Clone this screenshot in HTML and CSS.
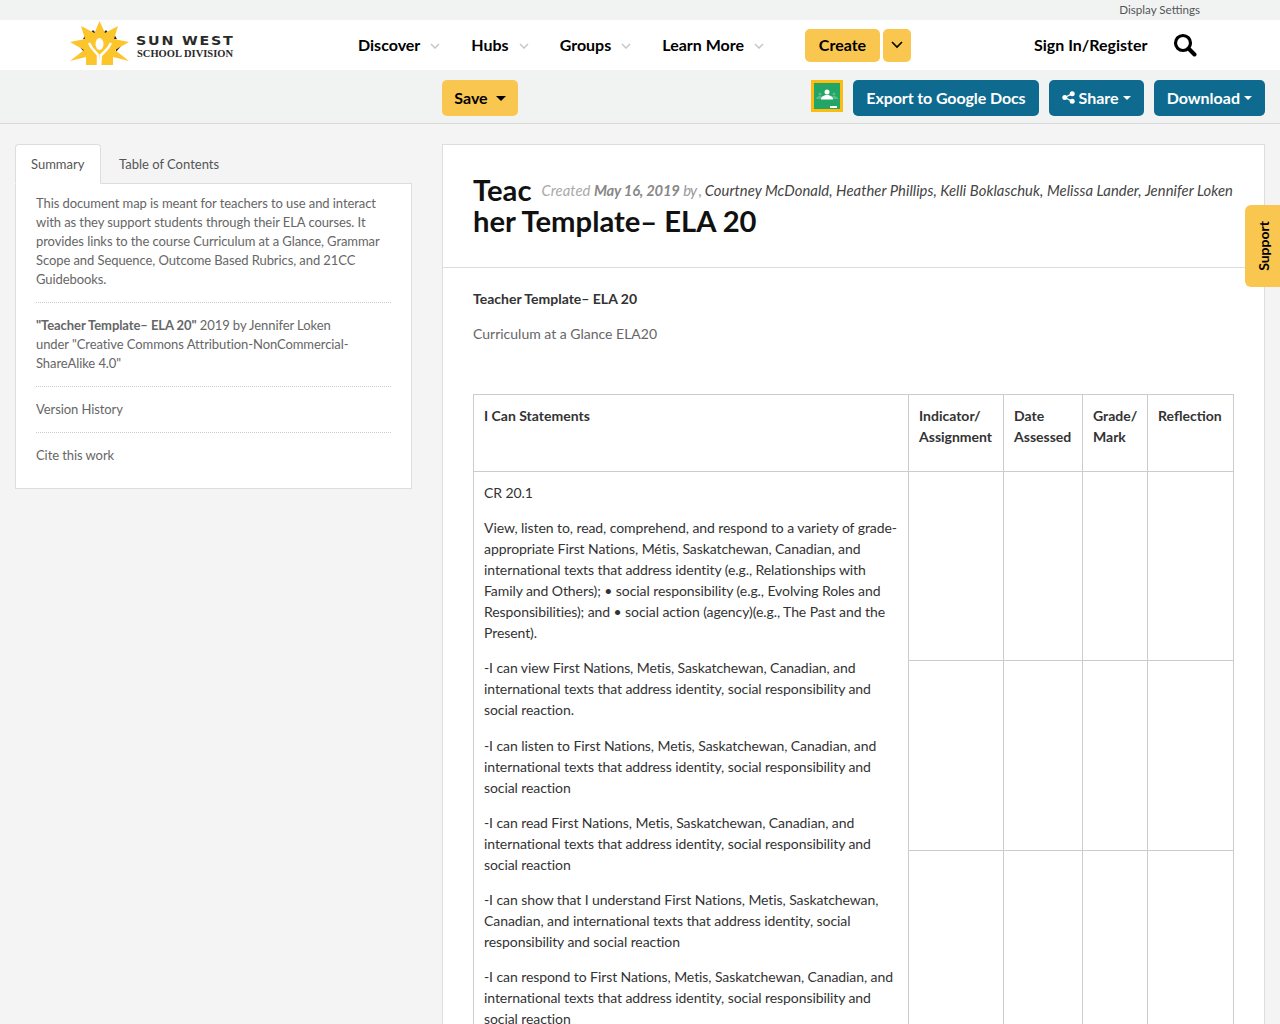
FILE: index.html
```html
<!DOCTYPE html>
<html lang="en">
<head>
<meta charset="utf-8">
<title>Teacher Template– ELA 20</title>
<link rel="stylesheet" href="styles.css">
</head>
<body>
<div class="topbar"><a class="display-settings">Display Settings</a></div>
<header class="nav">
  <a class="logo">
    <svg class="logo-mark" width="60" height="46" viewBox="0 0 60 46">
      <path fill="#2b2b2b" d="M18 16l5-6 5 5zM31 15l5-5 5 6zM13 19l3-5 4 6zM40 20l4-6 3 5zM8 25l6-1v8zM46 24l6 1-6 7z"/>
      <path fill="#fdc52c" d="M29.500 1l5.500 12L48 6l-4 13 15 3-14 8 14 11-16-4v8H16v-8L0 41l14-11L0 22l15-3-4-13 13.500 7z"/>
      <ellipse cx="29.500" cy="24" rx="4" ry="6" fill="#fff"/>
      <path fill="none" stroke="#fff" stroke-width="2.500" d="M19 23c3 7 7 9 9 12l0 11M41 23c-3 7-7 9-10 12l-1 11"/>
    </svg>
    <span class="logo-text">
      <span class="logo-sun">SUN WEST</span>
      <span class="logo-school">SCHOOL DIVISION</span>
    </span>
  </a>
  <nav class="menu">
    <a class="menu-item">Discover<svg class="chev" viewBox="0 0 10 6"><path d="M1 1l4 4 4-4"/></svg></a>
    <a class="menu-item">Hubs<svg class="chev" viewBox="0 0 10 6"><path d="M1 1l4 4 4-4"/></svg></a>
    <a class="menu-item">Groups<svg class="chev" viewBox="0 0 10 6"><path d="M1 1l4 4 4-4"/></svg></a>
    <a class="menu-item">Learn More<svg class="chev" viewBox="0 0 10 6"><path d="M1 1l4 4 4-4"/></svg></a>
  </nav>
  <div class="create-group">
    <a class="btn-yellow create">Create</a>
    <a class="btn-yellow create-toggle"><svg width="12" height="8" viewBox="0 0 12 8"><path d="M1 1l5 5 5-5" fill="none" stroke="#000" stroke-width="1.600"/></svg></a>
  </div>
  <a class="signin">Sign In/Register</a>
  <svg class="search" width="24" height="24" viewBox="0 0 24 24"><circle cx="10" cy="10" r="7.500" fill="none" stroke="#000" stroke-width="3.200"/><path d="M15.500 15.500l6 6" stroke="#000" stroke-width="4" stroke-linecap="round"/></svg>
</header>
<div class="toolbar">
  <div class="toolbar-left"><a class="btn-yellow save">Save<span class="caret caret-big"></span></a></div>
  <div class="toolbar-right">
    <svg class="classroom" width="32" height="32" viewBox="0 0 32 32">
      <rect x="1.500" y="1.500" width="29" height="29" fill="#23a566" stroke="#fdbc0f" stroke-width="3"/>
      <circle cx="9" cy="14" r="1.500" fill="#57bb8a"/><circle cx="23" cy="14" r="1.500" fill="#57bb8a"/>
      <path d="M5 19c0-2 2-3 4-3s4 1 4 3zM19 19c0-2 2-3 4-3s4 1 4 3z" fill="#57bb8a"/>
      <circle cx="16" cy="12" r="2.500" fill="#fff"/>
      <path d="M10 19.500c0-3 3-4.500 6-4.500s6 1.500 6 4.500z" fill="#fff"/>
      <rect x="19" y="26" width="7" height="2" fill="#fff"/>
    </svg>
    <a class="btn-blue btn-export">Export to Google Docs</a>
    <a class="btn-blue"><svg class="share-icon" width="13" height="13" viewBox="0 0 13 13"><circle cx="2.800" cy="6.500" r="2.500"/><circle cx="10.200" cy="2.700" r="2.500"/><circle cx="10.200" cy="10.300" r="2.500"/><path d="M2.800 6.500l7.400-3.800M2.800 6.500l7.400 3.800" stroke="#fff" stroke-width="1.300"/></svg>Share<span class="caret"></span></a>
    <a class="btn-blue">Download<span class="caret"></span></a>
  </div>
</div>
<main class="content">
  <aside class="sidebar">
    <div class="tabs">
      <a class="tab tab-active">Summary</a>
      <a class="tab">Table of Contents</a>
    </div>
    <div class="side-panel">
      <p class="side-sec">This document map is meant for teachers to use and interact with as they support students through their ELA courses. It provides links to the course Curriculum at a Glance, Grammar Scope and Sequence, Outcome Based Rubrics, and 21CC Guidebooks.</p>
      <p class="side-sec"><strong>"Teacher Template– ELA 20"</strong> 2019 by Jennifer Loken<br>under "Creative Commons Attribution-NonCommercial-ShareAlike 4.0"</p>
      <p class="side-sec">Version History</p>
      <p class="side-sec side-last">Cite this work</p>
    </div>
  </aside>
  <article class="doc">
    <header class="doc-head">
      <h1 class="doc-title">Teac<span class="doc-meta"><span class="meta-light">Created</span> <b>May 16, 2019</b> <span class="meta-light meta-by">by ,</span> Courtney McDonald, Heather Phillips, Kelli Boklaschuk, Melissa Lander, Jennifer Loken</span><br>her Template– ELA 20</h1>
    </header>
    <div class="doc-body">
      <p class="doc-sub"><strong>Teacher Template– ELA 20</strong></p>
      <p class="doc-link">Curriculum at a Glance ELA20</p>
      <table class="grid">
        <colgroup><col class="c1"><col class="c2"><col class="c3"><col class="c4"><col class="c5"></colgroup>
        <thead>
          <tr class="head-row">
            <th>I Can Statements</th>
            <th>Indicator/ Assignment</th>
            <th>Date Assessed</th>
            <th>Grade/ Mark</th>
            <th>Reflection</th>
          </tr>
        </thead>
        <tbody>
          <tr class="row-a">
            <td rowspan="3">
              <p>CR 20.1</p>
              <p>View, listen to, read, comprehend, and respond to a variety of grade-appropriate First Nations, Métis, Saskatchewan, Canadian, and international texts that address identity (e.g., Relationships with Family and Others); • social responsibility (e.g., Evolving Roles and Responsibilities); and • social action (agency)(e.g., The Past and the Present).</p>
              <p>-I can view First Nations, Metis, Saskatchewan, Canadian, and international texts that address identity, social responsibility and social reaction.</p>
              <p>-I can listen to First Nations, Metis, Saskatchewan, Canadian, and international texts that address identity, social responsibility and social reaction</p>
              <p>-I can read First Nations, Metis, Saskatchewan, Canadian, and international texts that address identity, social responsibility and social reaction</p>
              <p>-I can show that I understand First Nations, Metis, Saskatchewan, Canadian, and international texts that address identity, social responsibility and social reaction</p>
              <p>-I can respond to First Nations, Metis, Saskatchewan, Canadian, and international texts that address identity, social responsibility and social reaction</p>
            </td>
            <td></td><td></td><td></td><td></td>
          </tr>
          <tr class="row-a"><td></td><td></td><td></td><td></td></tr>
          <tr class="row-a"><td></td><td></td><td></td><td></td></tr>
        </tbody>
      </table>
    </div>
  </article>
</main>
<a class="support">Support</a>
</body>
</html>
```
FILE: styles.css
```css
* { box-sizing: border-box; }
html, body { margin: 0; padding: 0; }
body {
  font-family: Lato, "Liberation Sans", sans-serif;
  font-size: 14px;
  color: #333;
  background: #f4f4f4;
}
a { color: inherit; text-decoration: none; }
.topbar {
  height: 20px;
  background: #f1f3f3;
  display: flex;
  justify-content: flex-end;
  align-items: flex-start;
  padding-right: 80px;
}
.display-settings { font-size: 11.600px; color: #555; line-height: 20px; }
.nav {
  height: 50px;
  background: #fff;
  display: flex;
  align-items: center;
  padding-left: 70px;
  color: #000;
}
.logo { display: flex; align-items: center; width: 288px; height: 50px; }
.logo-mark { margin-top: -4px; flex: none; }
.logo-text { display: flex; flex-direction: column; margin-left: 6px; margin-top: 3px; color: #2a2a2a; }
.logo-sun { font-family: "DejaVu Sans", sans-serif; font-weight: 700; font-size: 13px; letter-spacing: 1.600px; line-height: 14px; white-space: nowrap; transform: scaleX(1.1); transform-origin: left; }
.logo-school { font-family: "Liberation Serif", serif; font-weight: 700; font-size: 10.500px; line-height: 12px; white-space: nowrap; margin-left: 1px; }
.menu { display: flex; width: 447px; }
.menu-item { font-size: 16px; font-weight: 700; display: flex; align-items: center; margin-right: 31px; padding-bottom: 2px; }
.chev { width: 10px; height: 6px; margin-left: 10px; margin-top: 4px; }
.chev path { fill: none; stroke: #c4c8c8; stroke-width: 1.500; }
.btn-yellow {
  background: #f9c74f;
  color: #000;
  border-radius: 5px;
  font-weight: 700;
  font-size: 16px;
  display: inline-flex;
  align-items: center;
  justify-content: center;
}
.create-group { display: flex; gap: 3px; width: 229px; }
.create { width: 75px; height: 33px; padding-bottom: 2px; }
.create-toggle { width: 28px; height: 33px; }
.signin { font-size: 16px; font-weight: 700; width: 141px; padding-bottom: 2px; margin-right: -2px; }
.search { margin-top: -1px; }
.toolbar {
  height: 54px;
  background: #f1f3f3;
  border-bottom: 1px solid #d9d9d9;
  display: flex;
  align-items: flex-start;
  padding: 10px 15px 0 442px;
  justify-content: space-between;
}
.save { width: 76px; height: 36px; padding-bottom: 2px; }
.caret { display: inline-block; width: 0; height: 0; margin-left: 4px; margin-top: 2px; border-top: 4px solid currentColor; border-left: 4px solid transparent; border-right: 4px solid transparent; }
.caret-big { margin-left: 8px; border-top-width: 5px; border-left-width: 5px; border-right-width: 5px; }
.toolbar-right { display: flex; gap: 10px; align-items: flex-start; }
.btn-blue {
  height: 36px;
  padding: 0 13px 2px;
  background: #0e6a8e;
  color: #fff;
  border-radius: 5px;
  font-size: 16px;
  font-weight: 700;
  display: inline-flex;
  align-items: center;
}
.btn-export { letter-spacing: -.1px; }
.share-icon { margin-right: 4px; fill: #fff; }
.content {
  display: flex;
  align-items: flex-start;
  padding: 20px 15px 0;
  gap: 30px;
}
.sidebar { width: 397px; flex: none; font-size: 13px; }
.tabs { display: flex; height: 40px; position: relative; z-index: 1; }
.tab { height: 40px; padding: 0 15px; margin-right: 2px; display: flex; align-items: center; color: #555; border: 1px solid transparent; }
.tab-active { background: #fff; border: 1px solid #ddd; border-bottom-color: #fff; border-radius: 4px 4px 0 0; width: 86px; padding: 0 0 0 15px; }
.side-panel {
  background: #fff;
  border: 1px solid #ddd;
  margin-top: -1px;
  padding: 10px 20px 6px;
  height: 306px;
  color: #666;
  line-height: 19px;
  letter-spacing: -.08px;
}
.side-sec { margin: 0 0 13px; padding-bottom: 13px; border-bottom: 1px dotted #ccc; }
.side-last { border-bottom: 0; margin: 0; padding: 0; }
.doc { flex: 1; background: #fff; border: 1px solid #ddd; border-bottom: 0; min-width: 0; overflow: hidden; }
.doc-head { height: 123px; padding: 29px 30px 0; border-bottom: 1px solid #ddd; }
.doc-title { margin: 0; font-size: 29.200px; line-height: 31px; font-weight: 700; color: #111; }
.doc-meta { margin-left: 10px; font-size: 14.800px; line-height: 1; font-weight: 400; font-style: italic; color: #444; vertical-align: 5px; letter-spacing: .05px; }
.meta-light { color: #aaa; }
.meta-by { letter-spacing: -.8px; color: #999; }
.doc-meta b { color: #888; letter-spacing: -.2px; }
.doc-body { padding: 20px 30px 0; font-size: 14px; line-height: 21px; }
.doc-sub { margin: 0 0 14px; color: #333; }
.doc-link { margin: 0 0 50px; color: #666; }
.grid { border-collapse: collapse; table-layout: fixed; width: 760px; color: #333; }
.c1 { width: 435px; } .c2 { width: 95px; } .c3 { width: 79px; } .c4 { width: 65px; } .c5 { width: 86px; }
.grid th, .grid td { border: 1px solid #ccc; padding: 10px; text-align: left; vertical-align: top; font-size: 14px; line-height: 21px; }
.grid td { letter-spacing: -.08px; }
.grid th { font-weight: 700; }
.head-row { height: 77px; }
.row-a { height: 189.400px; }
.grid p { margin: 0 0 14.200px; }
.grid p:last-child { margin-bottom: 0; }
.support {
  position: absolute;
  top: 205px;
  right: 0;
  width: 35px;
  height: 82px;
  padding-left: 2px;
  background: #f9c74f;
  border-radius: 6px 0 0 6px;
  color: #000;
  font-size: 14px;
  font-weight: 700;
  writing-mode: sideways-lr;
  display: flex;
  align-items: center;
  justify-content: center;
}
```
